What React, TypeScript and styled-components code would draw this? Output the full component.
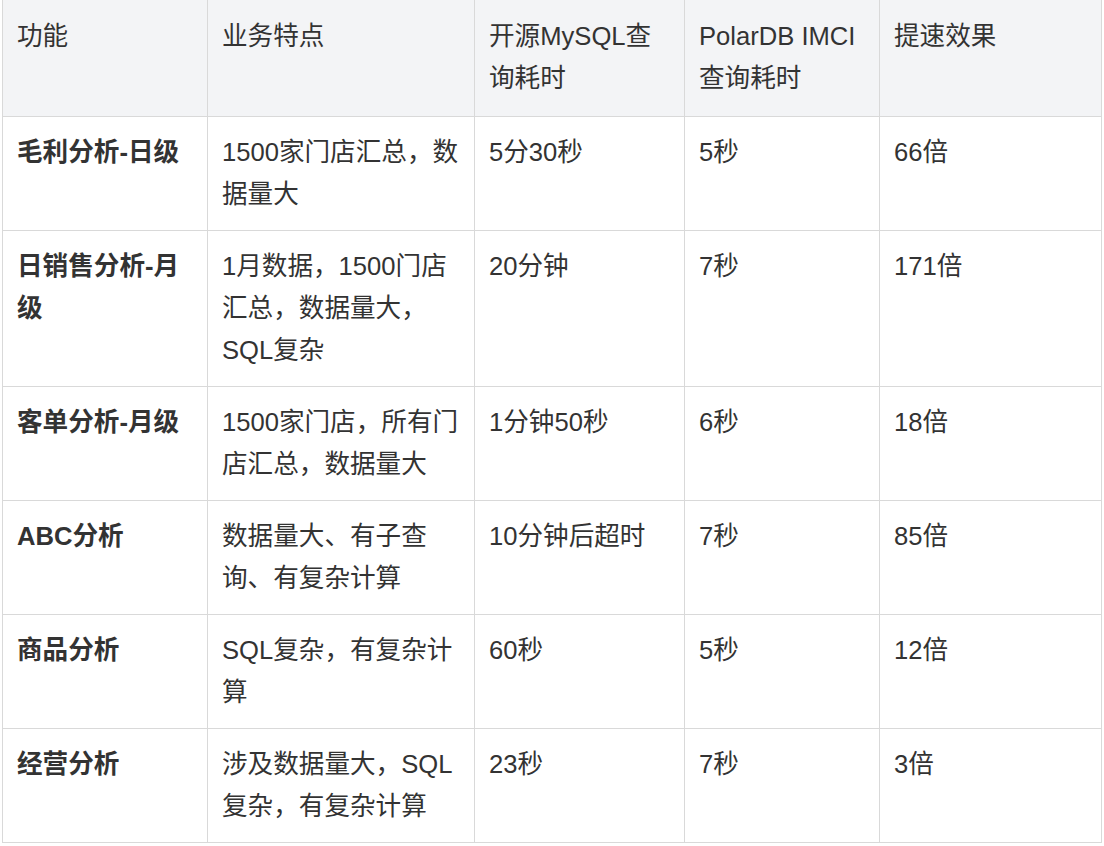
import React from 'react'
import styled, {createGlobalStyle} from 'styled-components';

type IRow = {
    name: string;
    feature: string;
    mysql: string;
    polar: string;
    speedup: string;
}

const rows: IRow[] = [
    {name: '毛利分析-日级', feature: '1500家门店汇总，数据量大', mysql: '5分30秒', polar: '5秒', speedup: '66倍'},
    {name: '日销售分析-月级', feature: '1月数据，1500门店汇总，数据量大，SQL复杂', mysql: '20分钟', polar: '7秒', speedup: '171倍'},
    {name: '客单分析-月级', feature: '1500家门店，所有门店汇总，数据量大', mysql: '1分钟50秒', polar: '6秒', speedup: '18倍'},
    {name: 'ABC分析', feature: '数据量大、有子查询、有复杂计算', mysql: '10分钟后超时', polar: '7秒', speedup: '85倍'},
    {name: '商品分析', feature: 'SQL复杂，有复杂计算', mysql: '60秒', polar: '5秒', speedup: '12倍'},
    {name: '经营分析', feature: '涉及数据量大，SQL复杂，有复杂计算', mysql: '23秒', polar: '7秒', speedup: '3倍'},
]

const colWidths = [205, 267, 210, 195, 222]

const App = () => {
  return (
    <>
      <GlobalStyle />
      <Table>
        <colgroup>
          {colWidths.map((w, i) => <col key={i} style={{width: w}} />)}
        </colgroup>
        <thead>
          <tr>
            <Th>功能</Th>
            <Th>业务特点</Th>
            <Th>开源MySQL查询耗时</Th>
            <Th>PolarDB IMCI查询耗时</Th>
            <Th>提速效果</Th>
          </tr>
        </thead>
        <tbody>
          {rows.map(r => (
            <tr key={r.name}>
              <Td $bold>{r.name}</Td>
              <Td>{r.feature}</Td>
              <Td>{r.mysql}</Td>
              <Td>{r.polar}</Td>
              <Td>{r.speedup}</Td>
            </tr>
          ))}
        </tbody>
      </Table>
    </>
  )
}

export default App

const GlobalStyle = createGlobalStyle`
body {
  margin: 0;
  background: #fff;
  font-family: "Liberation Sans", "Noto Sans CJK SC", sans-serif;
  color: #333;
}
`

const Table = styled.table`
margin: -1px 0 0 2px;
width: 1100px;
table-layout: fixed;
border-collapse: collapse;
font-size: 25.6px;
line-height: 42px;
`

const Th = styled.th`
background: #f3f4f6;
border: 1px solid #d9d9d9;
padding: 15px 14px 17px;
text-align: left;
vertical-align: top;
font-weight: normal;
`

const Td = styled.td<{ $bold?: boolean }>`
border: 1px solid #d9d9d9;
padding: 14px 14px 15px;
text-align: left;
vertical-align: top;
font-weight: ${p => p.$bold ? 'bold' : 'normal'};
`
